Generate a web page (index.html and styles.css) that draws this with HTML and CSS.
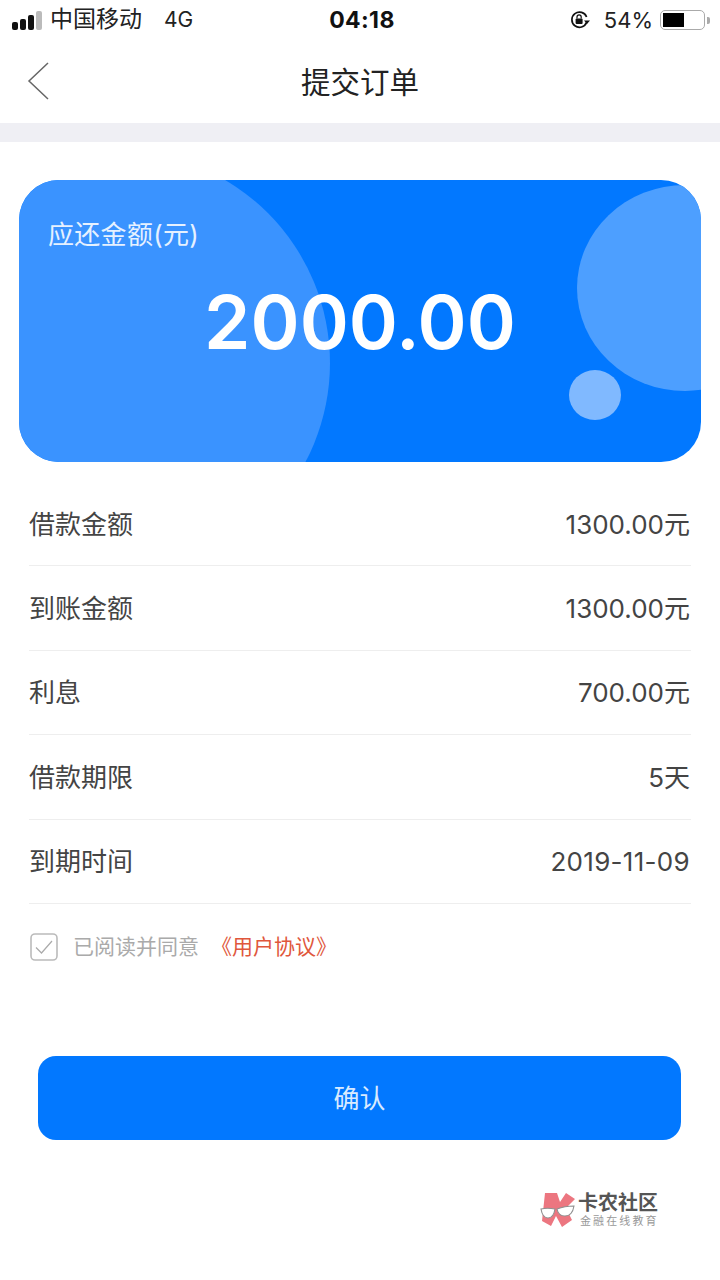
FILE: index.html
```html
<!DOCTYPE html>
<html lang="zh">
<head>
<meta charset="utf-8">
<title>提交订单</title>
<link rel="stylesheet" href="styles.css">
</head>
<body>
<div class="status">
  <div class="status-left">
    <span class="signal"><i></i><i></i><i></i><i class="off"></i></span>
    <span class="carrier">中国移动</span>
    <span class="net">4G</span>
  </div>
  <div class="clock">04:18</div>
  <div class="status-right">
    <svg class="lock" width="22" height="20" viewBox="0 0 22 20"><path d="M17.6 12.4A7.6 7.6 0 1 1 17.6 7" fill="none" stroke="#111" stroke-width="1.7"/><path d="M15 10.6h6l-3 3.4z" fill="#111"/><rect x="6.6" y="8.4" width="7" height="5.6" rx="1" fill="#111"/><path d="M8 8.6V7a2.1 2.1 0 0 1 4.2 0v1.6" fill="none" stroke="#111" stroke-width="1.2"/></svg>
    <span class="pct">54%</span>
    <span class="battery"><span class="battery-fill"></span></span><span class="battery-tip"></span>
  </div>
</div>
<header class="nav">
  <svg class="back" width="24" height="40" viewBox="0 0 24 40"><path d="M22 2 3 20l19 18" fill="none" stroke="#666" stroke-width="1.5"/></svg>
  <h1>提交订单</h1>
</header>
<div class="band"></div>
<main class="content">
  <section class="card">
    <div class="blob blob-a"></div>
    <div class="blob blob-b"></div>
    <div class="blob blob-c"></div>
    <div class="card-label">应还金额(元)</div>
    <div class="card-amount">2000.00</div>
  </section>
  <ul class="rows">
    <li class="row"><span>借款金额</span><span>1300.00元</span></li>
    <li class="row"><span>到账金额</span><span>1300.00元</span></li>
    <li class="row"><span>利息</span><span>700.00元</span></li>
    <li class="row"><span>借款期限</span><span>5天</span></li>
    <li class="row"><span>到期时间</span><span class="date">2019-11-09</span></li>
  </ul>
  <div class="agree">
    <svg class="check" width="28" height="28" viewBox="0 0 28 28"><rect x="1" y="1" width="26" height="26" rx="4" fill="none" stroke="#bbb" stroke-width="1.6"/><path d="M6 14.5l5.5 5.5L22 8" fill="none" stroke="#aaa" stroke-width="1.2"/></svg>
    <span class="agree-text">已阅读并同意</span>
    <span class="agree-link">《用户协议》</span>
  </div>
  <button class="confirm" type="button">确认</button>
</main>
<div class="mark">
  <svg class="mark-logo" width="38" height="38" viewBox="0 0 38 38"><path d="M5 2H17L20 11 26 2 35 8 26 17 32 29 22 36 16 25 11 35 2 30z" fill="#ec7680"/><path d="M1 18c4-1 9-1 14 0-1 6-3 9-7 9-4 0-6-3-7-9zM17 18c5-2 11-3 17-3-1 6-4 10-9 10-4 0-7-2-8-7z" fill="#fff" stroke="#8f8f8f" stroke-width="1.1"/></svg>
  <div class="mark-text">
    <div class="mark-title">卡农社区</div>
    <div class="mark-sub">金融在线教育</div>
  </div>
</div>
</body>
</html>
```
FILE: styles.css
```css
* { box-sizing: border-box; }
html, body { margin: 0; padding: 0; }
body {
  width: 720px;
  height: 1280px;
  background: #fff;
  overflow: hidden;
  position: relative;
  font-family: Inter, "Noto Sans CJK SC", sans-serif;
  color: #333;
}
.status {
  height: 40px;
  display: grid;
  grid-template-columns: 1fr auto 1fr;
  align-items: center;
  padding: 0 10px 0 12px;
}
.status-left { display: flex; align-items: center; font-size: 23px; line-height: 28px; color: #222; }
.signal { display: flex; align-items: flex-end; gap: 2px; height: 19px; margin-right: 8px; }
.signal i { width: 6px; background: #111; border-radius: 2px; display: block; }
.signal i:nth-child(1) { height: 8px; }
.signal i:nth-child(2) { height: 11px; }
.signal i:nth-child(3) { height: 15px; }
.signal i:nth-child(4) { height: 19px; }
.signal i.off { background: #bbb; }
.carrier { margin-bottom: 2px; }
.net { margin-left: 22px; font-size: 21px; }
.clock { font-size: 23px; font-weight: 700; color: #111; padding-left: 2px; letter-spacing: 0.4px; }
.status-right { display: flex; align-items: center; justify-content: flex-end; color: #222; font-size: 22px; }
.lock { margin-right: 13px; }
.pct { margin-right: 7px; }
.battery { width: 45px; height: 20px; border: 1.5px solid #aaa; border-radius: 5px; padding: 2px; display: block; }
.battery-fill { display: block; width: 21px; height: 100%; background: #000; }
.battery-tip { width: 3px; height: 7px; background: #aaa; border-radius: 0 2px 2px 0; margin-left: 2px; }
.nav {
  height: 83px;
  display: flex;
  align-items: center;
  justify-content: center;
  position: relative;
}
.nav h1 { margin: 0 0 3px; font-size: 29.5px; font-weight: 400; color: #222; }
.back { position: absolute; left: 26px; top: 21px; }
.band { height: 19px; background: #efeff4; }
.content { padding: 38px 19px 0; }
.card {
  height: 282px;
  border-radius: 40px;
  background: #0278ff;
  position: relative;
  overflow: hidden;
  color: #fff;
}
.blob { position: absolute; border-radius: 50%; }
.blob-a { left: -113px; top: -29px; width: 424px; height: 424px; background: #3a93ff; }
.blob-b { left: 558px; top: 5px; width: 216px; height: 206px; background: #4d9fff; }
.blob-c { left: 550px; top: 190px; width: 52px; height: 50px; background: #80b9ff; }
.card-label { position: relative; padding: 38px 0 0 29px; font-size: 26px; line-height: 34px; color: #e6f1ff; letter-spacing: 0.3px; }
.card-amount { position: relative; text-align: center; font-size: 74.5px; line-height: 90px; font-weight: 600; margin-top: 25px; }
.rows { list-style: none; margin: 20px 10px 0; padding: 0; }
.row {
  height: 84.4px;
  display: flex;
  align-items: center;
  justify-content: space-between;
  border-bottom: 1px solid #eee;
  padding: 0 1px 3px 0;
  font-size: 26px;
  color: #444;
}
.date { letter-spacing: 0.3px; padding-top: 3px; }
.agree { display: flex; align-items: center; margin: 29px 0 0 11px; font-size: 21px; line-height: 28px; }
.check { margin-right: 15px; }
.agree-text { color: #aaa; }
.agree-link { color: #e0573c; margin-left: 12px; }
.confirm {
  display: block;
  width: 643px;
  height: 84px;
  margin: 95px 0 0 19px;
  border: 0;
  border-radius: 18px;
  background: #0278ff;
  color: #d8eaff;
  font: inherit;
  font-size: 26px;
  padding-bottom: 4px;
}
.mark { position: absolute; left: 540px; top: 1191px; display: flex; align-items: center; gap: 0; }
.mark-title { font-size: 20px; line-height: 22px; font-weight: 700; color: #555; }
.mark-sub { font-size: 11px; line-height: 14px; color: #999; letter-spacing: 2.1px; margin-left: 2px; }
```
